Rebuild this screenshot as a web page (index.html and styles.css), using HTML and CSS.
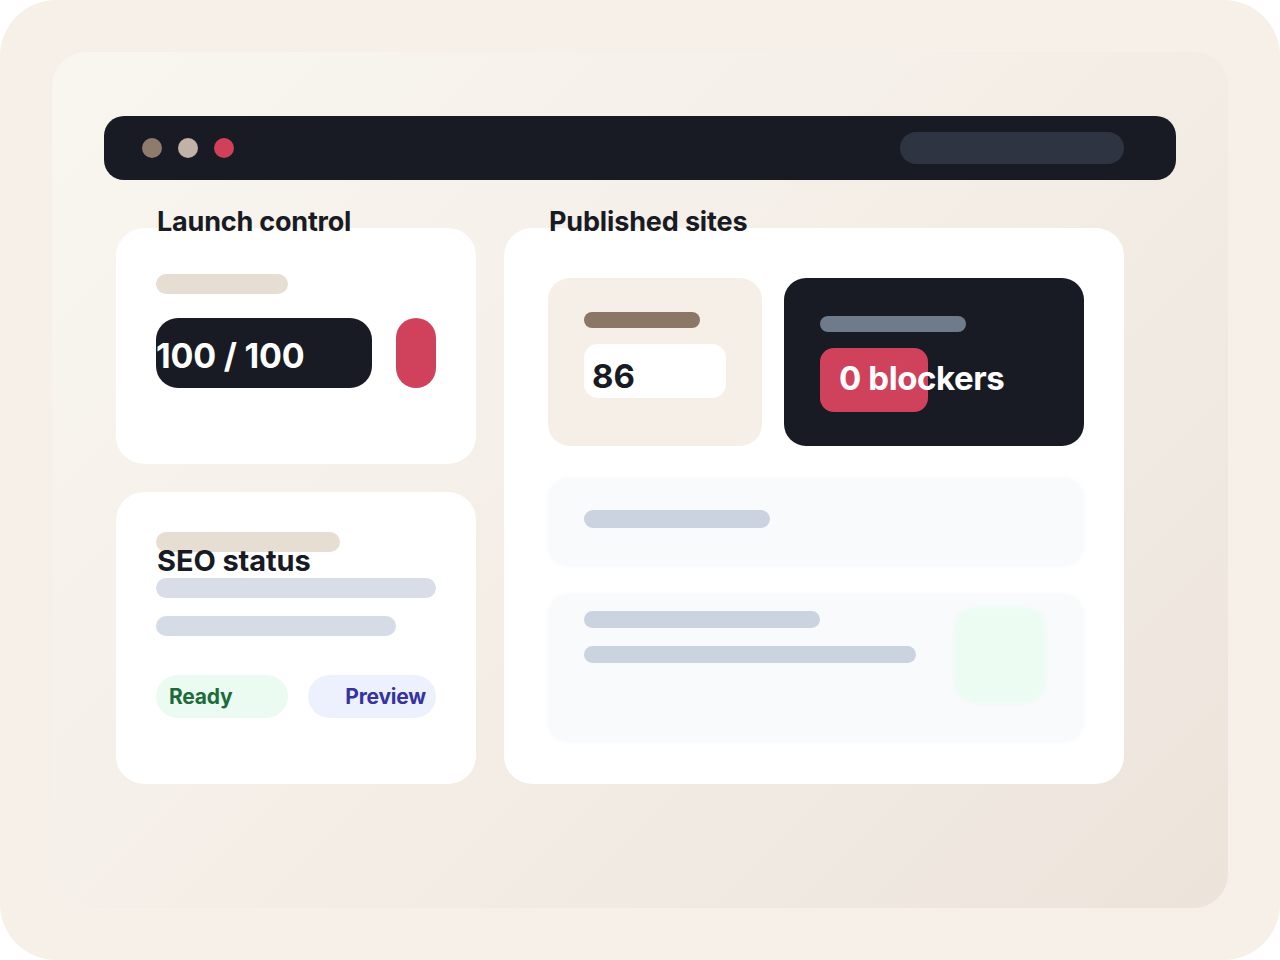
FILE: index.html
```html
<!DOCTYPE html>
<html lang="en">
<head>
<meta charset="utf-8">
<title>Launch control</title>
<link rel="stylesheet" href="styles.css">
</head>
<body>
<div class="frame">
  <div class="panel">
    <div class="topbar">
      <span class="dot dot-brown"></span>
      <span class="dot dot-taupe"></span>
      <span class="dot dot-red"></span>
      <span class="url"></span>
    </div>
    <div class="content">
      <div class="col-left">
        <section class="group">
          <h2 class="title">Launch control</h2>
          <div class="card card-launch">
            <div class="bar bar-beige bar-launch"></div>
            <div class="launch-row">
              <div class="score">100 / 100</div>
              <div class="red-pill"></div>
            </div>
          </div>
        </section>
        <div class="card card-seo">
          <div class="bar bar-beige bar-seo"></div>
          <h2 class="title seo-title">SEO status</h2>
          <div class="bar bar-slate bar-seo-1"></div>
          <div class="bar bar-slate bar-seo-2"></div>
          <div class="pills">
            <span class="pill pill-ready">Ready</span>
            <span class="pill pill-preview">Preview</span>
          </div>
        </div>
      </div>
      <section class="group col-right">
        <h2 class="title title-right">Published sites</h2>
        <div class="card card-sites">
          <div class="stats">
            <div class="stat stat-light">
              <div class="bar bar-brown"></div>
              <div class="num-box">86</div>
            </div>
            <div class="stat stat-dark">
              <div class="bar bar-grey"></div>
              <div class="blockers"><span class="blockers-text">0 blockers</span></div>
            </div>
          </div>
          <div class="row row-1">
            <div class="bar bar-row bar-row-1"></div>
          </div>
          <div class="row row-2">
            <div class="row-lines">
              <div class="bar bar-row bar-row-2"></div>
              <div class="bar bar-row bar-row-3"></div>
            </div>
            <div class="green-tile"></div>
          </div>
        </div>
      </section>
    </div>
  </div>
</div>
</body>
</html>
```

FILE: styles.css
```css
* { box-sizing: border-box; }
html, body { margin: 0; padding: 0; background: #ffffff; }
body { font-family: Inter, "Noto Sans", "Liberation Sans", sans-serif; color: #181b23; }

.frame {
  width: 1280px;
  height: 960px;
  border-radius: 56px;
  background: #f6f0e9;
  padding: 52px;
}

.panel {
  height: 856px;
  border-radius: 34px;
  background: linear-gradient(135deg, #f9f6f0 0%, #f4eee7 50%, #ece4db 100%);
  box-shadow: 0 0 6px 2px rgba(246, 240, 233, 0.9);
  padding: 64px 52px 0;
}

.topbar {
  height: 64px;
  border-radius: 20px;
  background: #181b23;
  display: flex;
  align-items: center;
  padding: 0 52px 0 38px;
  gap: 16px;
}
.dot { width: 20px; height: 20px; border-radius: 50%; flex: none; }
.dot-brown { background: #8f7b6b; }
.dot-taupe { background: #c1b1a6; }
.dot-red { background: #d1405a; }
.url {
  margin-left: auto;
  width: 224px;
  height: 32px;
  border-radius: 16px;
  background: #2e3441;
}

.content {
  display: flex;
  gap: 28px;
  padding: 0 52px 0 12px;
  margin-top: 25px;
}

.col-left { width: 360px; display: flex; flex-direction: column; gap: 28px; }
.col-right { width: 620px; }

.group { display: flex; flex-direction: column; }

.title {
  position: relative;
  z-index: 1;
  margin: 0 0 -11px 41px;
  font-size: 27px;
  line-height: 34px;
  font-weight: 700;
  letter-spacing: -0.2px;
  color: #181b23;
}
.title-right { margin-left: 45px; letter-spacing: -0.15px; }

.card {
  background: #ffffff;
  border-radius: 28px;
}

.bar { border-radius: 10px; }
.bar-beige { background: #e6ddd3; height: 20px; }

.card-launch { height: 236px; padding: 46px 40px 0; }
.bar-launch { width: 132px; margin-bottom: 24px; }
.launch-row { display: flex; gap: 24px; }
.score {
  width: 216px;
  height: 70px;
  border-radius: 22px;
  background: #181b23;
  color: #ffffff;
  font-size: 34px;
  font-weight: 700;
  line-height: 41px;
  padding-top: 17px;
  white-space: nowrap;
  letter-spacing: -0.2px;
}
.red-pill { width: 40px; height: 70px; border-radius: 20px; background: #d0425b; }

.card-seo { height: 292px; padding: 40px 40px 0; }
.bar-seo { width: 184px; }
.seo-title { margin: -8px 0 0 1px; font-size: 29px; letter-spacing: -0.1px; }
.bar-slate { height: 20px; background: #d8dde8; }
.bar-seo-1 { width: 280px; margin-top: 0; }
.bar-seo-2 { width: 240px; margin-top: 18px; background: #d6dce5; }
.pills { display: flex; gap: 20px; margin-top: 39px; }
.pill {
  height: 43px;
  border-radius: 22px;
  font-size: 21px;
  font-weight: 700;
  line-height: 43px;
  letter-spacing: -0.2px;
}
.pill-ready { width: 132px; background: #ecfbf1; color: #1d6b3b; padding-left: 13px; }
.pill-preview { width: 128px; background: #edf1fd; color: #3533a0; text-align: right; padding-right: 10px; }

.card-sites { height: 556px; padding: 50px 40px 0 44px; }
.stats { display: flex; gap: 22px; }
.stat { height: 168px; border-radius: 22px; }
.stat-light { width: 214px; background: #f5efe7; padding: 34px 36px 0; }
.bar-brown { width: 116px; height: 16px; border-radius: 8px; background: #8c7767; margin-bottom: 16px; }
.num-box {
  width: 142px;
  height: 54px;
  border-radius: 14px;
  background: #ffffff;
  padding: 12px 8px 0;
  font-size: 33px;
  font-weight: 700;
  line-height: 41px;
  color: #181b23;
}
.stat-dark { width: 300px; background: #181b23; padding: 38px 36px 0; }
.bar-grey { width: 146px; height: 16px; border-radius: 8px; background: #6f7a8a; margin-bottom: 16px; }
.blockers {
  width: 108px;
  height: 64px;
  border-radius: 14px;
  background: #d0425b;
  padding: 10px 0 0 19px;
  white-space: nowrap;
}
.blockers-text {
  font-size: 33px;
  font-weight: 700;
  line-height: 41px;
  color: #ffffff;
  letter-spacing: -0.4px;
}

.row {
  background: #f8fafc;
  border-radius: 22px;
  box-shadow: 0 0 4px 1px rgba(248, 250, 252, 0.9);
}
.row-1 { height: 88px; margin-top: 32px; padding: 32px 36px 0; }
.bar-row { height: 18px; border-radius: 9px; background: #cbd3e0; filter: blur(0.5px); }
.bar-row-1 { width: 186px; }
.row-2 { height: 148px; margin-top: 28px; padding: 17px 38px 0 36px; display: flex; justify-content: space-between; }
.row-lines { display: flex; flex-direction: column; gap: 18px; }
.bar-row-2 { width: 236px; height: 17px; }
.bar-row-3 { width: 332px; height: 17px; }
.green-tile {
  width: 92px;
  height: 96px;
  margin-top: -4px;
  border-radius: 22px;
  background: #ecfcf2;
  filter: blur(1.5px);
}
```
